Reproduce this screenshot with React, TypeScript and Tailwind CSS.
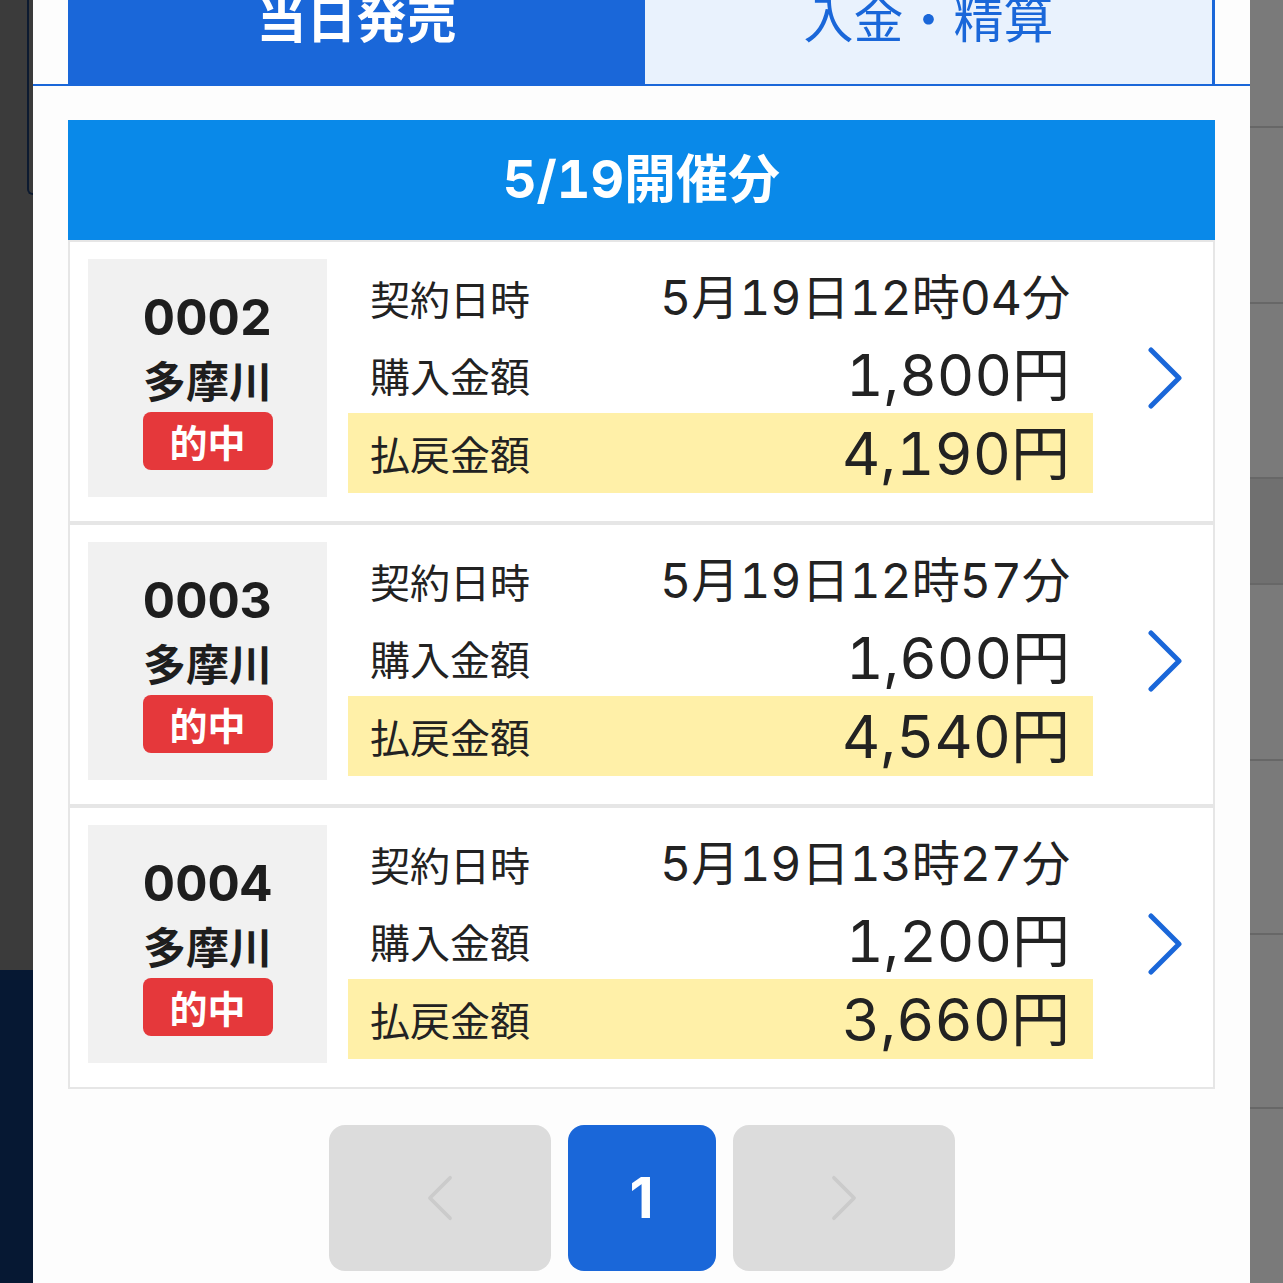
import React from 'react';

interface Ticket {
  no: string;
  place: string;
  date: string;
  buy: string;
  pay: string;
}

const TICKETS: Ticket[] = [
  { no: '0002', place: '多摩川', date: '5月19日12時04分', buy: '1,800円', pay: '4,190円' },
  { no: '0003', place: '多摩川', date: '5月19日12時57分', buy: '1,600円', pay: '4,540円' },
  { no: '0004', place: '多摩川', date: '5月19日13時27分', buy: '1,200円', pay: '3,660円' },
];

// dimmed page behind the sheet, left side
const LeftBackdrop = () => (
  <div className="flex w-[33px] shrink-0 flex-col bg-[#3b3b3b]">
    <div className="ml-[27px] h-[195px] rounded-bl-[14px] border-b-2 border-l-2 border-[#0c1a30]" />
    <div className="flex-1" />
    <div className="h-[313px] bg-[#061833]" />
  </div>
);

// dimmed page behind the sheet, right side (list rows)
const RightBackdrop = () => (
  <div className="flex w-[33px] shrink-0 flex-col bg-[#7a7a7a]">
    <div className="h-[128px] border-b-2 border-[#676767]" />
    <div className="h-[176px] border-b-2 border-[#676767]" />
    <div className="h-[175px] border-b-2 border-[#676767]" />
    <div className="h-[106px] border-b-2 border-[#676767] bg-[#707070]" />
    <div className="h-[176px] border-b-2 border-[#676767]" />
    <div className="h-[174px] border-b-2 border-[#676767]" />
    <div className="h-[174px] border-b-2 border-[#676767]" />
    <div className="flex-1" />
  </div>
);

const Chevron = ({ dir, className }: { dir: 'left' | 'right'; className?: string }) => (
  <svg viewBox="0 0 36 62" className={className} fill="none">
    <path
      d={dir === 'right' ? 'M4 3 L32 31 L4 59' : 'M32 3 L4 31 L32 59'}
      stroke="currentColor"
      strokeWidth="5"
      strokeLinecap="round"
      strokeLinejoin="round"
    />
  </svg>
);

// numbers read wider in the original, Inter with tabular figures is the closest match
const NUM_FONT = "font-['Inter','Noto_Sans_CJK_JP',sans-serif] tabular-nums";

const TicketCard = ({ t }: { t: Ticket }) => (
  <div className="flex h-[283px] border-2 border-[#e6e6e6] bg-white pl-[18px] pt-[17px] pb-[24px]">
    <div className="flex w-[239px] shrink-0 flex-col items-center justify-center bg-[#f1f1f1]">
      <div className={`${NUM_FONT} text-[50px] font-bold leading-[62px] text-[#1e1e1e]`}>{t.no}</div>
      <div className="text-[43px] font-bold leading-[62px] text-[#1e1e1e]">{t.place}</div>
      <div className="mt-[2px] flex h-[58px] w-[130px] items-center justify-center rounded-[8px] bg-[#e5383b] text-[38px] font-bold leading-none text-white">
        的中
      </div>
    </div>
    <div className="ml-[21px] flex w-[745px] shrink-0 flex-col">
      <div className="flex h-[77px] items-center justify-between pl-[22px] pr-[23px]">
        <span className="text-[40px] leading-none">契約日時</span>
        <span className={`${NUM_FONT} text-[48px] leading-none`}>{t.date}</span>
      </div>
      <div className="flex h-[77px] items-center justify-between pl-[22px] pr-[23px]">
        <span className="text-[40px] leading-none">購入金額</span>
        <span className={`${NUM_FONT} text-[58px] leading-none`}>{t.buy}</span>
      </div>
      <div className="flex h-[80px] items-center justify-between bg-[#fff0a8] pl-[22px] pr-[23px]">
        <span className="text-[40px] leading-none">払戻金額</span>
        <span className={`${NUM_FONT} text-[59px] leading-none`}>{t.pay}</span>
      </div>
    </div>
    <div className="flex flex-1 items-center justify-center pl-[24px]">
      <Chevron dir="right" className="h-[62px] w-[36px] text-[#1a67d9]" />
    </div>
  </div>
);

export default function App() {
  return (
    <div className="flex h-[1283px] w-full overflow-hidden font-['Noto_Sans_CJK_JP','Noto_Sans',sans-serif] text-[#222]">
      <LeftBackdrop />
      <main className="flex flex-1 flex-col bg-[#fdfdfd]">
        {/* tabs, scrolled so their tops are cut */}
        <div className="flex h-[84px] overflow-hidden px-[35px]">
          <div className="flex w-[577px] justify-center bg-[#1a67d9]">
            <span className="-mt-[9px] text-[50px] font-bold leading-[50px] text-white">当日発売</span>
          </div>
          <div className="flex flex-1 justify-center border-r-[3px] border-[#1a67d9] bg-[#e9f2fd]">
            <span className="-mt-[9px] text-[50px] leading-[50px] text-[#1a67d9]">入金・精算</span>
          </div>
        </div>
        <div className="h-[2px] bg-[#1a67d9]" />

        <div className="px-[35px] pt-[34px]">
          <div className="flex h-[120px] items-center justify-center bg-[#0989e9]">
            <span className={`${NUM_FONT} text-[52px] font-bold leading-none text-white`}>5/19開催分</span>
          </div>
          {TICKETS.map((t) => (
            <TicketCard key={t.no} t={t} />
          ))}
        </div>

        <div className="mt-[36px] flex justify-center gap-[17px]">
          <button className="flex h-[146px] w-[222px] items-center justify-center rounded-[16px] bg-[#dcdcdc]">
            <Chevron dir="left" className="h-[46px] w-[26px] text-[#cbcbcb]" />
          </button>
          <button className="flex h-[146px] w-[148px] items-center justify-center rounded-[16px] bg-[#1a67d9] font-['Inter',sans-serif] text-[56px] font-bold leading-none text-white">
            1
          </button>
          <button className="flex h-[146px] w-[222px] items-center justify-center rounded-[16px] bg-[#dcdcdc]">
            <Chevron dir="right" className="h-[46px] w-[26px] text-[#cbcbcb]" />
          </button>
        </div>
      </main>
      <RightBackdrop />
    </div>
  );
}
